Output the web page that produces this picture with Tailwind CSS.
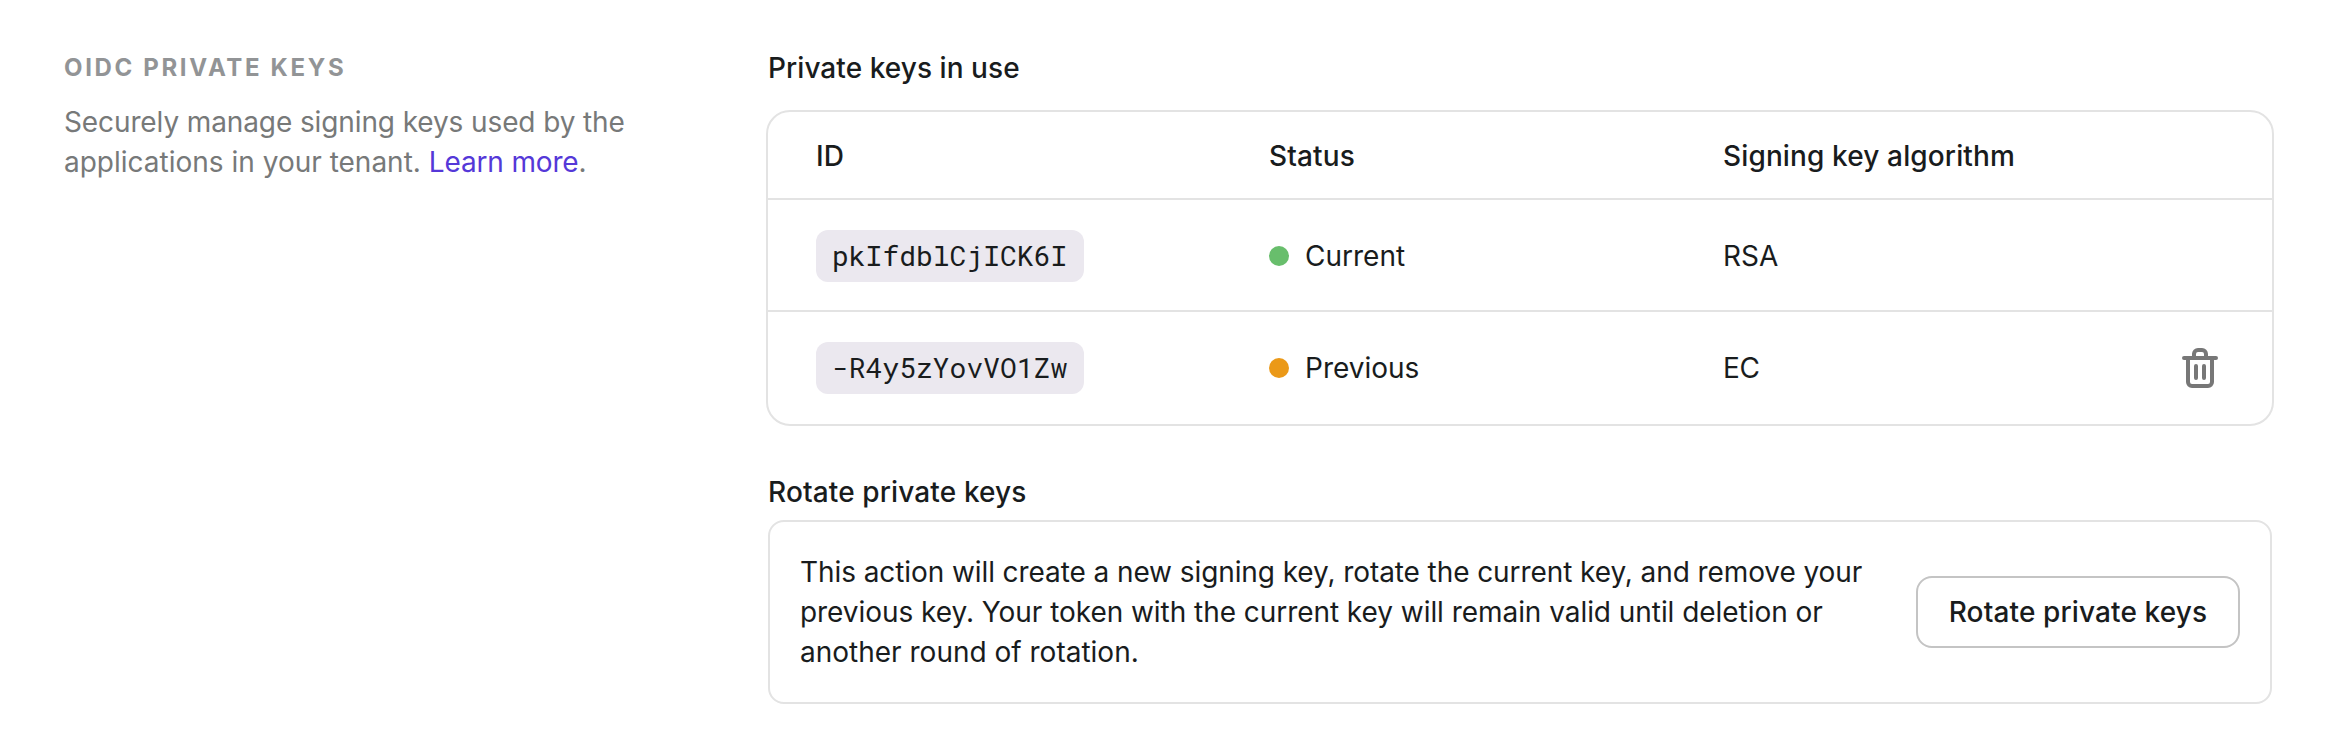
<!DOCTYPE html>
<html lang="en"><head><meta charset="utf-8"><title>OIDC private keys</title>
<script src="https://cdn.jsdelivr.net/npm/@tailwindcss/browser@4"></script></head>
<body class="bg-white font-['Inter',sans-serif] text-[28px] leading-10 text-[#191c1d]">
<main class="flex h-[752px] pl-16 pt-12">
<section class="w-[704px] shrink-0 pt-1">
<h2 class="text-2xl leading-8 font-bold tracking-[2.65px] text-[#929496]">OIDC PRIVATE KEYS</h2>
<p class="mt-[18px] w-[600px] text-[#777979]"><span class="tracking-[-0.11px]">Securely manage signing keys used by the</span><br>applications in your tenant. <a class="tracking-[-0.15px] text-[#5538d8]">Learn more</a>.</p>
</section>
<section class="w-[1504px]">
<h3 class="font-medium tracking-[0.06px]">Private keys in use</h3>
<div class="-ml-0.5 mt-[22px] w-[1508px] rounded-3xl border-2 border-[#e3e3e3]">
<div class="flex h-[86px] items-center pt-0.5 pl-12 font-medium tracking-[0.13px]"><div class="w-[453px]">ID</div><div class="w-[454px]">Status</div><div>Signing key algorithm</div></div>
<div class="flex h-28 items-center border-t-2 border-[#e3e3e3] pt-0.5 pl-12"><div class="flex w-[453px]"><span class="flex h-[52px] w-[268px] items-center rounded-xl bg-[#ebe8ef] px-4 font-['Roboto_Mono','DejaVu_Sans_Mono',monospace]">pkIfdblCjICK6I</span></div><div class="flex w-[454px] items-center gap-4"><span class="size-5 rounded-full bg-[#68be6c]"></span>Current</div><div>RSA</div></div>
<div class="flex h-[114px] items-center border-t-2 border-[#e3e3e3] pr-[52px] pl-12"><div class="flex w-[453px]"><span class="flex h-[52px] w-[268px] items-center rounded-xl bg-[#ebe8ef] px-4 font-['Roboto_Mono','DejaVu_Sans_Mono',monospace]">-R4y5zYovVO1Zw</span></div><div class="flex w-[454px] items-center gap-4"><span class="size-5 rounded-full bg-[#eb9918]"></span>Previous</div><div class="tracking-[-0.4px]">EC</div>
<button class="ml-auto text-[#777777]" aria-label="Delete key"><svg class="size-10" viewBox="0 0 40 40" fill="none" stroke="currentColor" stroke-width="4" stroke-linecap="round" stroke-linejoin="round"><path d="M4 10H36M14 10V6a4 4 0 0 1 4-4h4a4 4 0 0 1 4 4v4M8 10v24a4 4 0 0 0 4 4h16a4 4 0 0 0 4-4V10M16 18V30M24 18V30"/></svg></button></div>
</div>
<h3 class="mt-[46px] font-medium tracking-[0.13px]">Rotate private keys</h3>
<div class="mt-2 flex h-[184px] items-center justify-between rounded-2xl border-2 border-[#e3e3e3] px-[30px]"><p class="w-[1080px]"><span class="tracking-[-0.085px]">This action will create a new signing key, rotate the current key, and remove your</span> <span class="tracking-[-0.05px]">previous key. Your token with the current key will remain valid until deletion or</span> another round of rotation.</p><button class="h-[72px] w-[324px] rounded-2xl border-2 border-[#c4c4c4] font-medium tracking-[0.13px]">Rotate private keys</button></div>
</section></main></body></html>
